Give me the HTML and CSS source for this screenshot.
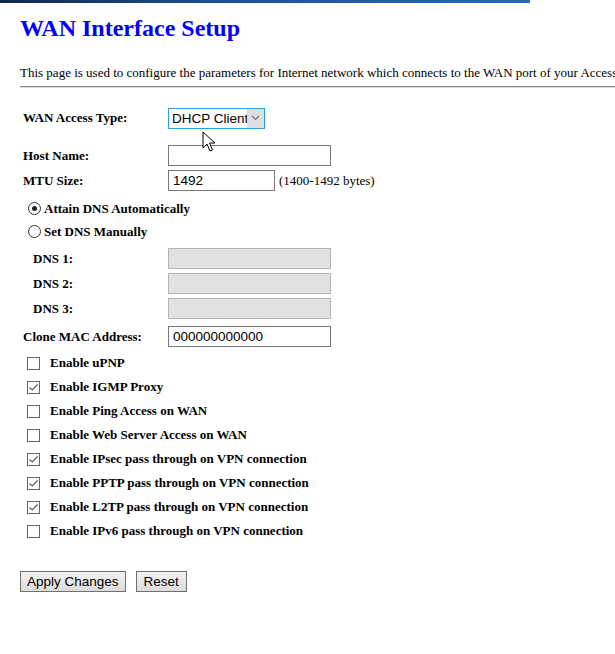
FILE: index.html
```html
<!DOCTYPE html>
<html>
<head>
<meta charset="utf-8">
<title>WAN Interface Setup</title>
<link rel="stylesheet" href="styles.css">
</head>
<body>
<div class="topbar"></div>
<div class="page">
  <h2 class="title">WAN Interface Setup</h2>
  <p class="intro">This page is used to configure the parameters for Internet network which connects to the WAN port of your Access Point.</p>
  <div class="rule"></div>

  <div class="form">
    <div class="row r-type">
      <span class="label">WAN Access Type:</span>
      <span class="select">
        <span class="select-text">DHCP Client</span>
        <span class="select-arrow"><svg width="9" height="6" viewBox="0 0 9 6"><path d="M1 1 L4.5 4.5 L8 1" fill="none" stroke="#7a7a7a" stroke-width="1.2"/></svg></span>
      </span>
    </div>
    <div class="row r-host">
      <span class="label">Host Name:</span>
      <span class="input wide"></span>
    </div>
    <div class="row r-mtu">
      <span class="label">MTU Size:</span>
      <span class="input narrow">1492</span>
      <span class="hint">(1400-1492 bytes)</span>
    </div>
    <div class="row r-radio">
      <span class="radio on"></span>
      <span class="radio-label">Attain DNS Automatically</span>
    </div>
    <div class="row r-radio">
      <span class="radio"></span>
      <span class="radio-label">Set DNS Manually</span>
    </div>
    <div class="row r-dns first">
      <span class="label indent">DNS 1:</span>
      <span class="input wide disabled"></span>
    </div>
    <div class="row r-dns">
      <span class="label indent">DNS 2:</span>
      <span class="input wide disabled"></span>
    </div>
    <div class="row r-dns">
      <span class="label indent">DNS 3:</span>
      <span class="input wide disabled"></span>
    </div>
    <div class="row r-mac">
      <span class="label">Clone MAC Address:</span>
      <span class="input wide">000000000000</span>
    </div>

    <div class="checks">
      <div class="check-row"><span class="box"></span><span class="check-label">Enable uPNP</span></div>
      <div class="check-row"><span class="box"><svg width="11" height="11" viewBox="0 0 11 11"><path d="M1.5 5.5 L4.2 8 L9.5 2.5" fill="none" stroke="#555" stroke-width="1.1"/></svg></span><span class="check-label">Enable IGMP Proxy</span></div>
      <div class="check-row"><span class="box"></span><span class="check-label">Enable Ping Access on WAN</span></div>
      <div class="check-row"><span class="box"></span><span class="check-label">Enable Web Server Access on WAN</span></div>
      <div class="check-row"><span class="box"><svg width="11" height="11" viewBox="0 0 11 11"><path d="M1.5 5.5 L4.2 8 L9.5 2.5" fill="none" stroke="#555" stroke-width="1.1"/></svg></span><span class="check-label">Enable IPsec pass through on VPN connection</span></div>
      <div class="check-row"><span class="box"><svg width="11" height="11" viewBox="0 0 11 11"><path d="M1.5 5.5 L4.2 8 L9.5 2.5" fill="none" stroke="#555" stroke-width="1.1"/></svg></span><span class="check-label">Enable PPTP pass through on VPN connection</span></div>
      <div class="check-row"><span class="box"><svg width="11" height="11" viewBox="0 0 11 11"><path d="M1.5 5.5 L4.2 8 L9.5 2.5" fill="none" stroke="#555" stroke-width="1.1"/></svg></span><span class="check-label">Enable L2TP pass through on VPN connection</span></div>
      <div class="check-row"><span class="box"></span><span class="check-label">Enable IPv6 pass through on VPN connection</span></div>
    </div>

    <div class="buttons">
      <span class="btn">Apply Changes</span>
      <span class="btn reset">Reset</span>
    </div>
  </div>
</div>
<svg class="cursor" width="14" height="22" viewBox="0 0 14 22"><path d="M1 1 L1 17 L5 13 L8 20 L10.5 19 L7.5 12 L13 12 Z" fill="#fff" stroke="#000" stroke-width="1"/></svg>
</body>
</html>
```
FILE: styles.css
```css
html, body {
  margin: 0;
  padding: 0;
  background: #fff;
  overflow: hidden;
}
body {
  width: 615px;
  height: 654px;
  position: relative;
  font-family: "Liberation Serif", "Times New Roman", serif;
  color: #000;
}
.topbar {
  width: 530px;
  height: 3px;
  background: linear-gradient(to right, #14284a, #1f4f94 40%, #2a66c0);
}
.page {
  padding-left: 20px;
}
.title {
  margin: 0;
  padding-top: 11px;
  font-size: 24px;
  line-height: 28px;
  font-weight: bold;
  color: #0000ff;
}
.intro {
  margin: 23px 0 0 0;
  font-size: 13px;
  line-height: 15px;
  white-space: nowrap;
}
.rule {
  margin-top: 6px;
  height: 1px;
  background: #8a8a8a;
  border-bottom: 1px solid #d8d8d8;
}
.form {
  padding-top: 19px;
  padding-left: 3px;
}
.row {
  display: flex;
  align-items: center;
}
.label {
  width: 145px;
  flex: none;
  font-size: 13px;
  font-weight: bold;
}
.label.indent {
  padding-left: 10px;
  width: 135px;
}
.r-type { height: 22px; margin-bottom: 14px; }
.r-host { height: 25px; }
.r-mtu { height: 25px; margin-bottom: 4px; }
.r-radio { height: 23px; padding-left: 5px; }
.r-dns { height: 25px; }
.r-dns.first { margin-top: 3px; }
.r-mac { height: 27px; margin-top: 2px; }
.select {
  display: flex;
  align-items: stretch;
  position: relative;
  height: 19px;
  width: 95px;
  border: 1px solid #2a9ee0;
  font-family: "Liberation Sans", Arial, sans-serif;
  font-size: 13.5px;
}
.select-text {
  flex: 1;
  padding-left: 3px;
  line-height: 19px;
  white-space: nowrap;
}
.select-arrow {
  position: absolute;
  right: 0;
  top: 0;
  bottom: 0;
  width: 17px;
  background: #dedede;
  display: flex;
  align-items: center;
  justify-content: center;
}
.input {
  display: block;
  box-sizing: border-box;
  height: 21px;
  border: 1px solid #7a7a7a;
  background: #fff;
  font-family: "Liberation Sans", Arial, sans-serif;
  font-size: 13.5px;
  line-height: 19px;
  padding-left: 4px;
}
.input.wide { width: 163px; }
.input.narrow { width: 107px; }
.input.disabled {
  background: #e1e1e1;
  border-color: #b5b5b5;
}
.hint {
  margin-left: 4px;
  font-size: 13px;
}
.radio {
  width: 11px;
  height: 11px;
  border: 1px solid #333;
  border-radius: 50%;
  box-sizing: content-box;
  position: relative;
  flex: none;
  margin-right: 3px;
}
.radio.on::after {
  content: "";
  position: absolute;
  left: 3px;
  top: 3px;
  width: 5px;
  height: 5px;
  border-radius: 50%;
  background: #222;
}
.radio-label {
  font-size: 13px;
  font-weight: bold;
}
.checks {
  padding-top: 1px;
}
.check-row {
  height: 24px;
  display: flex;
  align-items: center;
  padding-left: 4px;
}
.box {
  width: 11px;
  height: 11px;
  border: 1px solid #666;
  flex: none;
  display: flex;
  align-items: center;
  justify-content: center;
  margin-right: 10px;
}
.check-label {
  font-size: 13px;
  font-weight: bold;
}
.buttons {
  margin-top: 28px;
  margin-left: -3px;
  display: flex;
  gap: 10px;
}
.btn {
  box-sizing: border-box;
  height: 21px;
  padding: 0 6px;
  border: 1px solid #707070;
  background: linear-gradient(#f2f2f2, #dcdcdc);
  font-family: "Liberation Sans", Arial, sans-serif;
  font-size: 13.5px;
  line-height: 19px;
}
.btn.reset {
  padding: 0 7px;
}
.cursor {
  position: absolute;
  left: 202px;
  top: 131px;
}
```
